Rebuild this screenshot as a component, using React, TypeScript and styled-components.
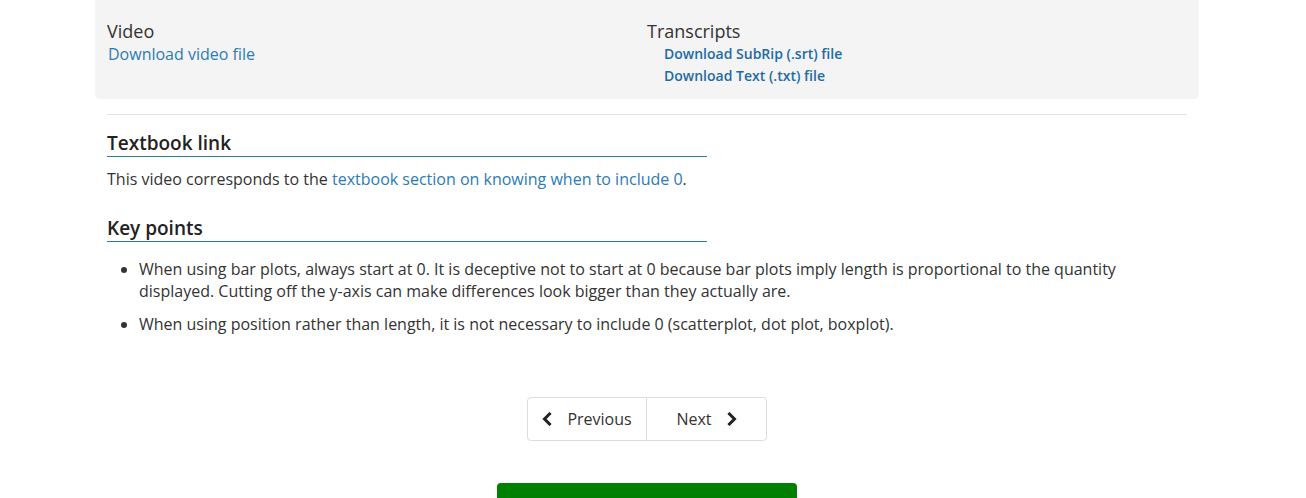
import React from "react";
import styled, { createGlobalStyle } from "styled-components";

const Global = createGlobalStyle`
  html, body { margin: 0; padding: 0; background: #fff; }
  body { font-family: "Open Sans", "Liberation Sans", sans-serif; color: #333; font-size: 16px; }
  * { box-sizing: border-box; }
`;

const Page = styled.div`
  width: 1104px;
  margin-left: 95px;
  display: flex;
  flex-direction: column;
`;

const Panel = styled.div`
  background: #f4f4f4;
  border-radius: 0 0 5px 5px;
  padding: 19px 12px 12px;
  display: grid;
  grid-template-columns: 540px 1fr;
`;

const PanelCol = styled.div`
  display: flex;
  flex-direction: column;
`;

const PanelTitle = styled.div`
  font-size: 18px;
  line-height: 24px;
  color: #333;
`;

const VideoLink = styled.a`
  font-size: 16px;
  line-height: 22px;
  color: #2c7bb6;
  text-decoration: none;
  padding-left: 1px;
`;

const TranscriptList = styled.div`
  display: flex;
  flex-direction: column;
  padding-left: 17px;
`;

const TranscriptLink = styled.a`
  font-size: 14px;
  line-height: 22px;
  font-weight: 600;
  color: #1f6ba6;
  text-decoration: none;
`;

const Rule = styled.hr`
  border: 0;
  border-top: 1px solid #e3e3e3;
  margin: 15px 12px 0;
`;

const Content = styled.div`
  padding: 0 12px;
  display: flex;
  flex-direction: column;
`;

const SectionTitle = styled.h3<{ $top: number }>`
  margin: ${(p) => p.$top}px 0 0;
  width: 600px;
  font-size: 19px;
  line-height: 26px;
  font-weight: 600;
  color: #222;
  border-bottom: 1px solid #2a7b93;
`;

const Para = styled.p`
  margin: 11px 0 0;
  font-size: 16px;
  line-height: 22px;
  color: #333;
`;

const InlineLink = styled.a`
  color: #2c7bb6;
  text-decoration: none;
`;

const List = styled.ul`
  margin: 16px 0 0;
  padding-left: 32px;
  display: flex;
  flex-direction: column;
  gap: 11px;
`;

const Item = styled.li`
  font-size: 16px;
  line-height: 22px;
  color: #333;
`;

const Pager = styled.nav`
  margin-top: 62px;
  align-self: center;
  display: flex;
  border: 1px solid #ddd;
  border-radius: 4px;
`;

const PagerButton = styled.a<{ $w: number; $divider?: boolean }>`
  width: ${(p) => p.$w}px;
  height: 42px;
  display: flex;
  align-items: center;
  justify-content: center;
  gap: 15px;
  font-size: 16px;
  color: #333;
  text-decoration: none;
  border-left: ${(p) => (p.$divider ? "1px solid #ddd" : "none")};
`;

const Chevron = styled.svg`
  width: 10px;
  height: 14px;
  flex: none;
`;

const GreenButton = styled.div`
  margin-top: 42px;
  align-self: center;
  width: 300px;
  height: 50px;
  background: #008000;
  border-radius: 4px;
`;

function ChevronIcon({ dir }: { dir: "left" | "right" }) {
  const pts = dir === "left" ? "7.5,2 2.5,7 7.5,12" : "2.5,2 7.5,7 2.5,12";
  return (
    <Chevron viewBox="0 0 10 14" aria-hidden="true">
      <polyline points={pts} fill="none" stroke="#222" strokeWidth="3" strokeLinecap="square" strokeLinejoin="miter" />
    </Chevron>
  );
}

export default function App() {
  return (
    <>
      <Global />
      <Page>
        <Panel>
          <PanelCol>
            <PanelTitle>Video</PanelTitle>
            <VideoLink href="#">Download video file</VideoLink>
          </PanelCol>
          <PanelCol>
            <PanelTitle>Transcripts</PanelTitle>
            <TranscriptList>
              <TranscriptLink href="#">Download SubRip (.srt) file</TranscriptLink>
              <TranscriptLink href="#">Download Text (.txt) file</TranscriptLink>
            </TranscriptList>
          </PanelCol>
        </Panel>
        <Rule />
        <Content>
          <SectionTitle $top={15}>Textbook link</SectionTitle>
          <Para>
            This video corresponds to the{" "}
            <InlineLink href="#">textbook section on knowing when to include 0</InlineLink>.
          </Para>
          <SectionTitle $top={25}>Key points</SectionTitle>
          <List>
            <Item>
              When using bar plots, always start at 0. It is deceptive not to start at 0 because bar plots imply length is proportional to the quantity displayed. Cutting off the y-axis can make differences look bigger than they actually are.
            </Item>
            <Item>
              When using position rather than length, it is not necessary to include 0 (scatterplot, dot plot, boxplot).
            </Item>
          </List>
        </Content>
        <Pager>
          <PagerButton href="#" $w={118}>
            <ChevronIcon dir="left" />
            Previous
          </PagerButton>
          <PagerButton href="#" $w={120} $divider>
            Next
            <ChevronIcon dir="right" />
          </PagerButton>
        </Pager>
        <GreenButton />
      </Page>
    </>
  );
}
